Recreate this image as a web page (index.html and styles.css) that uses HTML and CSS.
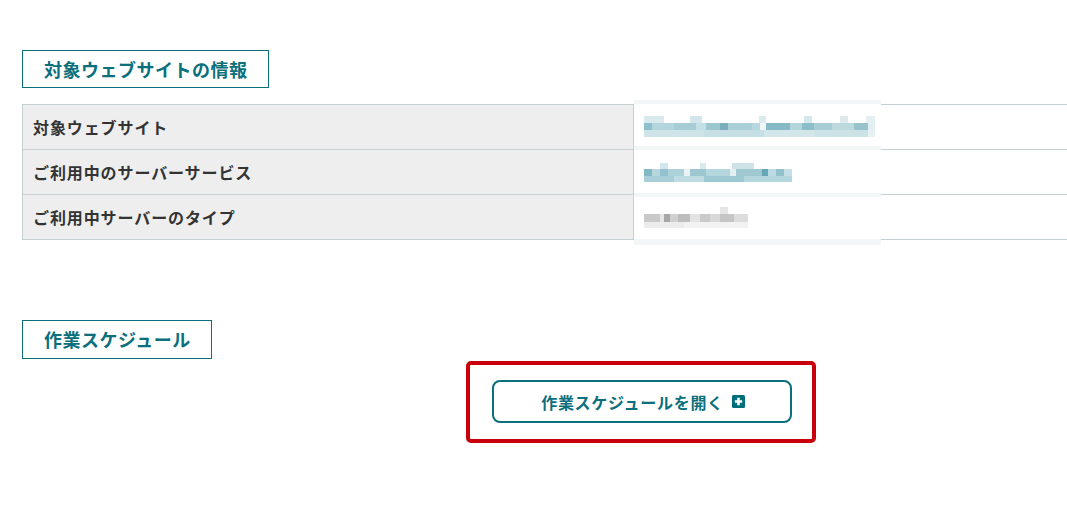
FILE: index.html
```html
<!DOCTYPE html>
<html lang="ja">
<head>
<meta charset="utf-8">
<title>対象ウェブサイトの情報</title>
<link rel="stylesheet" href="styles.css">
</head>
<body>
<main class="page">
  <section class="section">
    <h2 class="sec-title">対象ウェブサイトの情報</h2>
    <div class="table-wrap">
      <table class="info">
        <tr><th>対象ウェブサイト</th><td></td></tr>
        <tr><th>ご利用中のサーバーサービス</th><td></td></tr>
        <tr><th>ご利用中サーバーのタイプ</th><td></td></tr>
      </table>
      <div class="mask">
        <div class="mask-row"><div class="blob blob1"><i class="b-top"></i><i class="b-mid"></i><i class="b-bot"></i></div></div>
        <div class="mask-row"><div class="blob blob2"><i class="b-top"></i><i class="b-mid"></i><i class="b-bot"></i></div></div>
        <div class="mask-row"><div class="blob blob3"><i class="b-top"></i><i class="b-mid"></i><i class="b-bot"></i></div></div>
      </div>
    </div>
  </section>

  <section class="section section2">
    <h2 class="sec-title">作業スケジュール</h2>
    <div class="btn-row">
      <div class="highlight">
        <button class="open-btn" type="button">作業スケジュールを開く<span class="plus-icon"><svg viewBox="0 0 13 13" width="13" height="13"><rect x="0" y="0" width="13" height="13" rx="1.5" fill="#006d7b"/><path d="M6.5 2.8v7.4M2.8 6.5h7.4" stroke="#fff" stroke-width="2.6"/></svg></span></button>
      </div>
    </div>
  </section>
</main>
</body>
</html>
```

FILE: styles.css
```css
html, body {
  margin: 0;
  padding: 0;
  background: #ffffff;
  overflow: hidden;
}
body {
  font-family: "Noto Sans CJK JP", "Noto Sans", sans-serif;
  color: #333333;
}
.page {
  padding-top: 50px;
}
.section {
  padding-left: 22px;
}
.section2 {
  margin-top: 80px;
}
.sec-title {
  display: inline-block;
  margin: 0;
  height: 38px;
  box-sizing: border-box;
  border: 1px solid #0b6f7c;
  padding: 0 20px 0 21px;
  font-size: 18px;
  font-weight: 700;
  letter-spacing: 0.5px;
  line-height: 36px;
  color: #0b6f7c;
}
.section2 .sec-title {
  height: 39px;
  line-height: 37px;
}
.table-wrap {
  position: relative;
  margin-top: 16px;
  width: 1120px;
}
.info {
  width: 100%;
  border-collapse: collapse;
}
.info th, .info td {
  border: 1px solid #c6d0d3;
  height: 44px;
  padding: 0;
}
.info th {
  width: 600px;
  background: #eeeeee;
  text-align: left;
  padding-left: 10px;
  font-size: 16px;
  font-weight: 700;
  letter-spacing: 0.9px;
  color: #333333;
}
.info td {
  background: #ffffff;
}
.mask {
  position: absolute;
  left: 612px;
  top: -4px;
  width: 247px;
  height: 145px;
  display: flex;
  flex-direction: column;
  background: #f3f6f6;
  padding: 4px 0 6px;
  box-sizing: border-box;
  gap: 4px;
}
.mask-row {
  flex: 1;
  background: #ffffff;
  display: flex;
  align-items: center;
  padding-left: 10px;
}
.blob {
  display: flex;
  flex-direction: column;
}
.blob i {
  display: block;
}
.blob1 { width: 231px; margin-top: 2px; }
.blob2 { width: 148px; margin-top: 2px; }
.blob3 { width: 104px; margin-top: 0; }

.blob1 .b-top {
  height: 7px;
  background: linear-gradient(90deg, #d9eaee 0 20px, transparent 20px 46px, #d3e6ea 46px 58px, transparent 58px 115px, #dbeaee 115px 122px, transparent 122px 160px, #d6e8ec 160px 168px, transparent 168px 196px, #dceaee 196px 204px, transparent 204px 222px, #e3eff1 222px 231px);
}
.blob1 .b-mid {
  height: 7px;
  background: linear-gradient(90deg, #8fbfcb 0 8px, #b3d5dd 8px 30px, #a6ccd5 30px 52px, #c4dfe5 52px 62px, #9cc7d1 62px 76px, #7aaebd 76px 84px, #aacfd8 84px 108px, #b8d8df 108px 116px, #f0f5f5 116px 122px, #86b9c6 122px 146px, #b4d5dc 146px 158px, #8dbdc9 158px 170px, #a8cdd6 170px 188px, #bcdade 188px 210px, #98c3cd 210px 224px, #e2eef1 224px 231px);
}
.blob1 .b-bot {
  height: 7px;
  background: linear-gradient(90deg, #cfe4e9 0 60px, #c6dfe5 60px 120px, #d3e7eb 120px 170px, #cbe2e7 170px 224px, #e6f1f3 224px 231px);
}
.blob2 .b-top {
  height: 6px;
  background: linear-gradient(90deg, transparent 0 16px, #d2e6eb 16px 24px, transparent 24px 56px, #d6e9ed 56px 62px, transparent 62px 88px, #cde3e8 88px 110px, transparent 110px 148px);
}
.blob2 .b-mid {
  height: 7px;
  background: linear-gradient(90deg, #84b8c5 0 8px, #b7d7df 8px 16px, #93c1cc 16px 24px, #acd1d9 24px 40px, #eaf2f3 40px 46px, #9cc6d0 46px 62px, #b4d6dd 62px 86px, #e4eff1 86px 92px, #9fc8d1 92px 118px, #66a6b8 118px 124px, #bcdae1 124px 132px, #93c1cb 132px 140px, #c4dfe5 140px 148px);
}
.blob2 .b-bot {
  height: 6px;
  background: linear-gradient(90deg, #a8cfd7 0 30px, #bedce2 30px 60px, #9ec9d2 60px 100px, #b4d6dd 100px 148px);
}
.blob3 .b-top {
  height: 7px;
  background: linear-gradient(90deg, transparent 0 76px, #e5e5e5 76px 84px, transparent 84px 104px);
}
.blob3 .b-mid {
  height: 8px;
  background: linear-gradient(90deg, #c9c9c9 0 16px, #e6e6e6 16px 20px, #a7a7a7 20px 26px, #d0d0d0 26px 34px, #bdbdbd 34px 46px, #e3e3e3 46px 56px, #cacaca 56px 66px, #d8d8d8 66px 76px, #c5c5c5 76px 90px, #dcdcdc 90px 104px);
}
.blob3 .b-bot {
  height: 6px;
  background: linear-gradient(90deg, #ececec 0 40px, #f2f2f2 40px 104px);
}
.btn-row {
  display: flex;
  padding-left: 444px;
  margin-top: 2px;
}
.highlight {
  border: 4px solid #c8000b;
  border-radius: 5px;
  padding: 15px 20px 16px 22px;
}
.open-btn {
  width: 300px;
  height: 43px;
  box-sizing: border-box;
  border: 2px solid #0b6f7c;
  border-radius: 8px;
  background: #ffffff;
  display: flex;
  align-items: center;
  justify-content: center;
  gap: 8px;
  font-family: "Noto Sans CJK JP", "Noto Sans", sans-serif;
  font-size: 16px;
  font-weight: 700;
  letter-spacing: 0.7px;
  color: #0b6f7c;
  padding: 0 0 0 2px;
}
.plus-icon {
  display: flex;
  width: 13px;
  height: 13px;
}
```
